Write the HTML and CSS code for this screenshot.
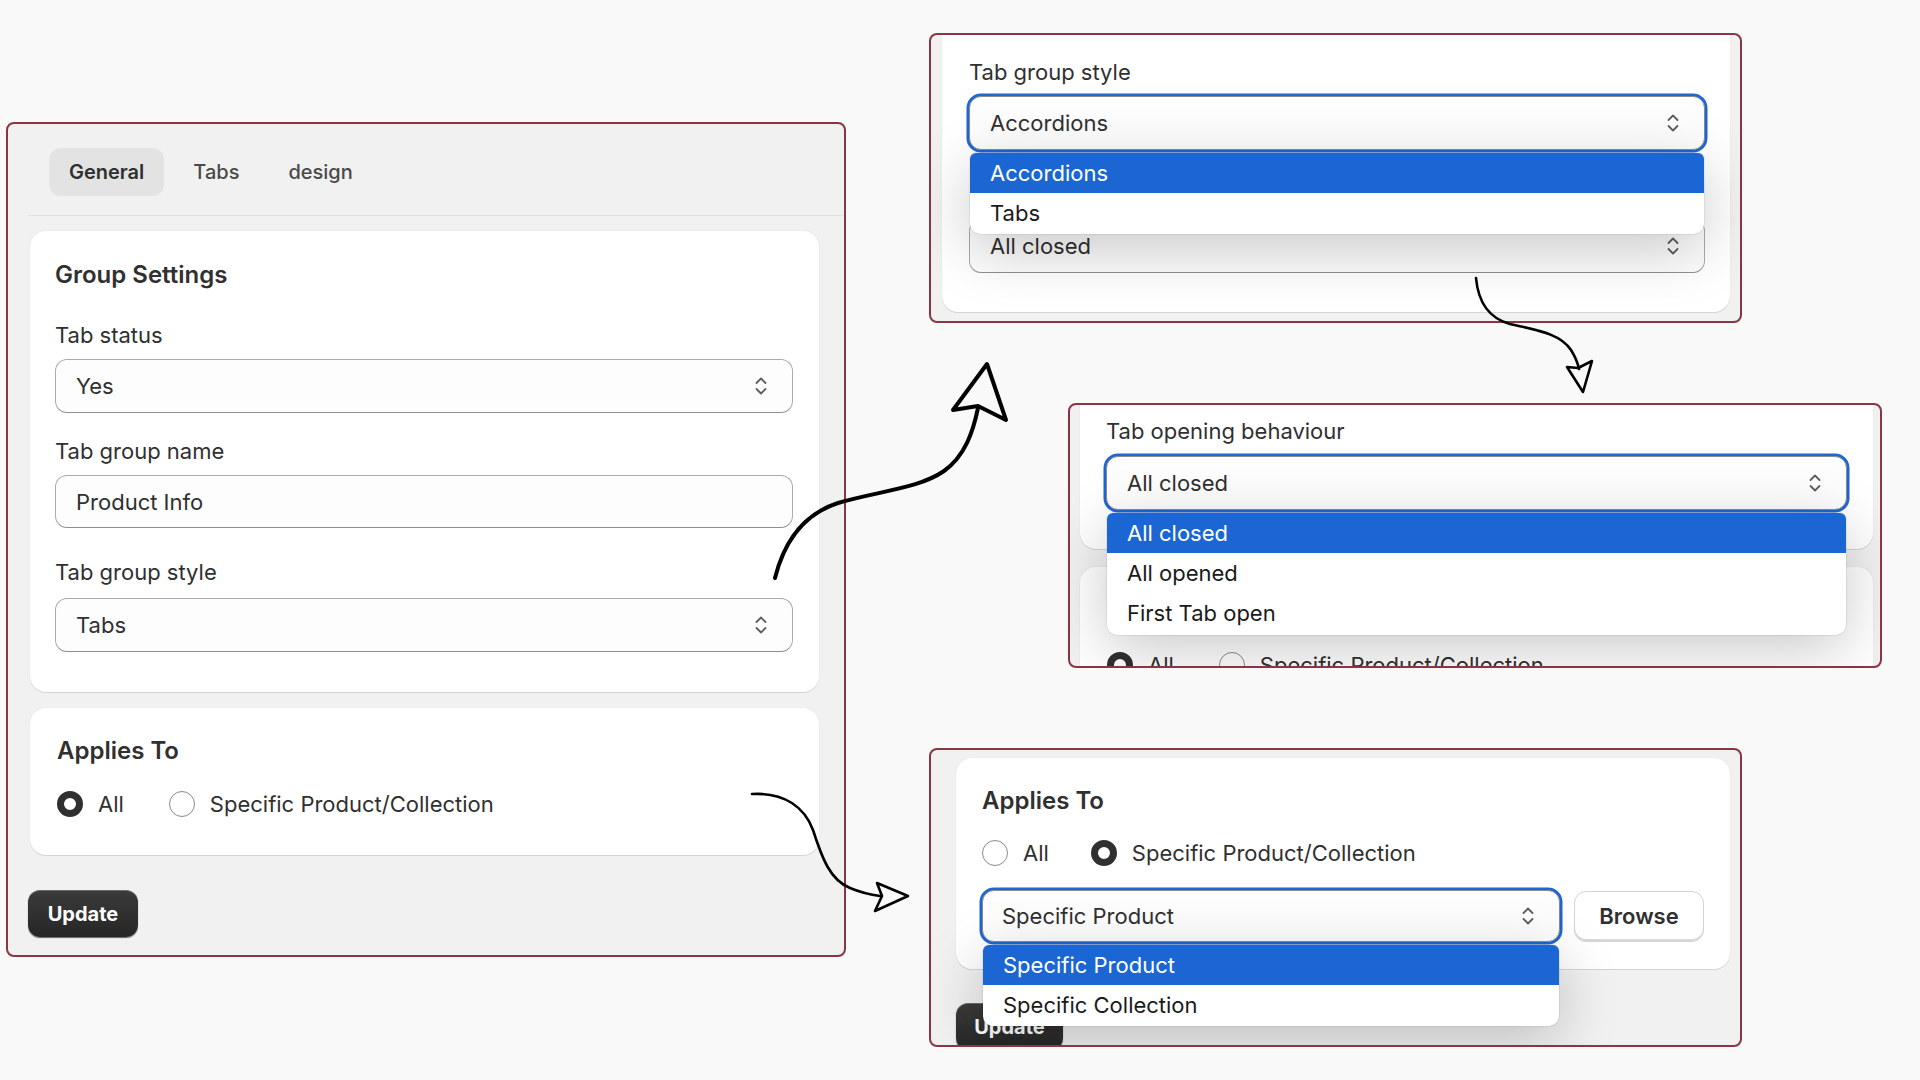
FILE: index.html
```html
<!DOCTYPE html>
<html lang="en">
<head>
<meta charset="utf-8">
<title>Tab group settings</title>
<link rel="stylesheet" href="styles.css">
</head>
<body>
<div class="canvas">

  <section class="shot shot-main">
    <nav class="tabbar">
      <span class="tab is-active">General</span>
      <span class="tab">Tabs</span>
      <span class="tab">design</span>
    </nav>
    <div class="main-body">
      <div class="card card-settings">
        <h2 class="card-title">Group Settings</h2>
        <div class="field field-first">
          <label class="field-label">Tab status</label>
          <div class="select"><span>Yes</span><svg class="chev" viewBox="0 0 12 18"><path d="M1.5 6 6 1.5 10.5 6M1.5 12 6 16.5 10.5 12"/></svg></div>
        </div>
        <div class="field">
          <label class="field-label">Tab group name</label>
          <div class="text-input">Product Info</div>
        </div>
        <div class="field field-after-input">
          <label class="field-label field-label-loose">Tab group style</label>
          <div class="select"><span>Tabs</span><svg class="chev" viewBox="0 0 12 18"><path d="M1.5 6 6 1.5 10.5 6M1.5 12 6 16.5 10.5 12"/></svg></div>
        </div>
      </div>
      <div class="card card-applies">
        <h2 class="card-title">Applies To</h2>
        <div class="radio-group">
          <span class="radio-option"><span class="radio is-checked"></span>All</span>
          <span class="radio-option"><span class="radio"></span>Specific Product/Collection</span>
        </div>
      </div>
      <button class="btn-primary">Update</button>
    </div>
  </section>

  <section class="shot shot-style">
    <div class="card card-clip card-style">
      <label class="field-label">Tab group style</label>
      <div class="select is-open">
        <span>Accordions</span><svg class="chev" viewBox="0 0 12 18"><path d="M1.5 6 6 1.5 10.5 6M1.5 12 6 16.5 10.5 12"/></svg>
        <div class="menu">
          <div class="menu-item is-selected">Accordions</div>
          <div class="menu-item">Tabs</div>
        </div>
      </div>
      <div class="field field-hidden-label">
        <label class="field-label is-covered">Tab opening behaviour</label>
        <div class="select"><span>All closed</span><svg class="chev" viewBox="0 0 12 18"><path d="M1.5 6 6 1.5 10.5 6M1.5 12 6 16.5 10.5 12"/></svg></div>
      </div>
    </div>
  </section>

  <section class="shot shot-behaviour">
    <div class="card card-clip card-behaviour">
      <label class="field-label">Tab opening behaviour</label>
      <div class="select is-open">
        <span>All closed</span><svg class="chev" viewBox="0 0 12 18"><path d="M1.5 6 6 1.5 10.5 6M1.5 12 6 16.5 10.5 12"/></svg>
        <div class="menu">
          <div class="menu-item is-selected">All closed</div>
          <div class="menu-item">All opened</div>
          <div class="menu-item">First Tab open</div>
        </div>
      </div>
    </div>
    <div class="card card-behaviour-applies">
      <h2 class="card-title is-covered">Applies To</h2>
      <div class="radio-group">
        <span class="radio-option"><span class="radio is-checked"></span>All</span>
        <span class="radio-option"><span class="radio"></span>Specific Product/Collection</span>
      </div>
    </div>
  </section>

  <section class="shot shot-applies">
    <div class="card card-applies-open">
      <h2 class="card-title">Applies To</h2>
      <div class="radio-group">
        <span class="radio-option"><span class="radio"></span>All</span>
        <span class="radio-option"><span class="radio is-checked"></span>Specific Product/Collection</span>
      </div>
      <div class="picker-row">
        <div class="select is-open select-compact">
          <span>Specific Product</span><svg class="chev" viewBox="0 0 12 18"><path d="M1.5 6 6 1.5 10.5 6M1.5 12 6 16.5 10.5 12"/></svg>
          <div class="menu menu-tight">
            <div class="menu-item is-selected">Specific Product</div>
            <div class="menu-item">Specific Collection</div>
          </div>
        </div>
        <button class="btn-secondary">Browse</button>
      </div>
    </div>
    <button class="btn-primary btn-primary-clipped">Update</button>
  </section>

  <svg class="arrows" viewBox="0 0 1920 1080" width="1920" height="1080">
    <g class="arrow arrow-thick">
      <path d="M775 578 C784 542 804 514 838 503 C878 491 918 489 944 471 C965 456 973 432 978 408"/>
      <path d="M987 364 L1006 420 L978 406 L953 410 Z"/>
    </g>
    <g class="arrow">
      <path d="M752 794 C785 792 805 808 813 830 C822 858 830 880 850 888 C862 893 872 895 880 896"/>
      <path d="M877 883 L908 896 L875 911 L882 896 Z"/>
    </g>
    <g class="arrow">
      <path d="M1476 278 C1478 300 1488 318 1510 324 C1535 330 1560 333 1571 350 C1576 358 1578 364 1579 369"/>
      <path d="M1567 367 L1578 368 L1592 361 L1583 392 Z"/>
    </g>
  </svg>
</div>
</body>
</html>
```

FILE: styles.css
```css
* { box-sizing: border-box; }

html, body { margin: 0; padding: 0; }

body {
  width: 1920px;
  height: 1080px;
  overflow: hidden;
  background: #f9f9f9;
  font-family: Inter, "Noto Sans", "Liberation Sans", sans-serif;
  color: #303030;
}

.canvas { position: relative; width: 1920px; height: 1080px; }

/* screenshot frames placed on the canvas */
.shot {
  position: absolute;
  border: 2px solid #8b3443;
  border-radius: 8px;
  background: #f1f1f1;
  overflow: hidden;
  display: flex;
  flex-direction: column;
}
.shot-main { left: 6px; top: 122px; width: 840px; height: 835px; }
.shot-style { left: 929px; top: 33px; width: 813px; height: 290px; }
.shot-behaviour { left: 1068px; top: 403px; width: 814px; height: 265px; }
.shot-applies { left: 929px; top: 748px; width: 813px; height: 299px; }

/* tabs */
.tabbar {
  display: flex;
  gap: 9px;
  margin-left: 20px;
  padding: 24px 0 19px 21px;
  border-bottom: 1px solid #e2e2e2;
}
.tab {
  height: 48px;
  padding: 0 20px;
  border-radius: 12px;
  display: flex;
  align-items: center;
  font-size: 20px;
  font-weight: 500;
  color: #4a4a4a;
}
.tab.is-active { background: #e3e3e3; color: #303030; font-weight: 600; }

.main-body {
  display: flex;
  flex-direction: column;
  padding: 15px 25px 0 22px;
}

/* cards */
.card {
  background: #fff;
  border-radius: 16px;
  box-shadow: 0 1px 0 #d4d4d4, 0 0 0 1px #ececec;
  flex-shrink: 0;
}
.card-title {
  margin: 0;
  font-size: 24px;
  line-height: 26px;
  font-weight: 600;
}
.card-settings { padding: 31px 26px 40px 25px; }
.card-applies { margin-top: 16px; padding: 30px 26px 38px 27px; }

.field { margin-top: 25px; }
.field-first { margin-top: 34px; }
.field-after-input { margin-top: 31px; }
.field-hidden-label { margin-top: 32px; }

.field-label {
  display: block;
  font-size: 22px;
  line-height: 26px;
  margin-bottom: 11px;
}
.field-label-loose { margin-bottom: 13px; }
.is-covered { visibility: hidden; }

.select, .text-input {
  position: relative;
  height: 54px;
  border: 1px solid #ababab;
  border-bottom-color: #8f8f8f;
  border-radius: 12px;
  background: #fdfdfd;
  display: flex;
  align-items: center;
  justify-content: space-between;
  padding: 0 25px 0 20px;
  font-size: 22px;
}
.text-input { height: 53px; }
.chev {
  width: 12px;
  height: 18px;
  fill: none;
  stroke: #5e5e5e;
  stroke-width: 1.8;
  stroke-linecap: round;
  stroke-linejoin: round;
}
.select.is-open {
  border-color: #8a8a8a;
  box-shadow: 0 0 0 2.5px #1d66d6;
  z-index: 3;
}

/* open dropdown menu */
.menu {
  position: absolute;
  top: calc(100% + 4px);
  left: 0;
  right: 0;
  background: #fff;
  border-radius: 6px 6px 10px 10px;
  box-shadow: 0 14px 60px rgba(0, 0, 0, 0.22), 0 0 0 0.5px rgba(0, 0, 0, 0.12);
  overflow: hidden;
  padding-bottom: 1px;
}
.menu-item {
  height: 40px;
  padding: 0 20px;
  display: flex;
  align-items: center;
  font-size: 22px;
  color: #1a1a1a;
}
.menu-item.is-selected { background: #1b66d2; color: #fff; }
.menu-tight { top: calc(100% + 4px); }

/* clipped cards in the zoomed frames */
.card-clip { margin-top: -30px; }
.card-style { margin-left: 11px; margin-right: 10px; padding: 54px 25px 39px 27px; }
.card-behaviour { margin-left: 10px; margin-right: 7px; padding: 43px 26px 39px 26px; }
.card-behaviour .field-label { margin-bottom: 12px; }
.card-behaviour .menu { padding-bottom: 2px; }
.card-behaviour-applies { margin: 18px 7px 0 10px; padding: 31px 26px 30px 27px; }

.card-applies-open { margin: 8px 10px 0 25px; padding: 30px 26px 27px 26px; }

/* radios */
.radio-group { display: flex; gap: 45px; margin-top: 28px; }
.card-applies .radio-group { margin-top: 27px; }
.card-applies-open .radio-group { margin-top: 26px; gap: 42px; }
.radio-option {
  display: flex;
  align-items: center;
  gap: 15px;
  font-size: 22px;
  line-height: 26px;
}
.radio {
  width: 26px;
  height: 26px;
  border-radius: 50%;
  border: 1.5px solid #8a8a8a;
  background: #fff;
}
.radio.is-checked { border: 7px solid #303030; }

.picker-row { display: flex; gap: 14px; margin-top: 24px; align-items: center; }
.select-compact { flex: 1; height: 52px; padding-left: 19px; }

.btn-secondary {
  width: 130px;
  height: 51px;
  border: 1px solid #d3d3d3;
  border-radius: 12px;
  background: #fff;
  box-shadow: inset 0 -2px 0 #d9d9d9;
  font-family: inherit;
  font-size: 22px;
  font-weight: 600;
  color: #303030;
}

.btn-primary {
  align-self: flex-start;
  margin-top: 35px;
  margin-left: -2px;
  width: 110px;
  height: 47px;
  border: none;
  border-radius: 12px;
  background: linear-gradient(#3b3b3b, #262626);
  box-shadow: inset 0 1px 0 rgba(255, 255, 255, 0.25), 0 1px 1px rgba(0, 0, 0, 0.6);
  font-family: inherit;
  font-size: 20px;
  font-weight: 700;
  color: #fff;
  flex-shrink: 0;
}
.btn-primary-clipped { margin-top: 34px; margin-left: 25px; width: 107px; }

/* hand-drawn arrows overlay */
.arrows { position: absolute; left: 0; top: 0; pointer-events: none; }
.arrow path {
  fill: none;
  stroke: #000;
  stroke-width: 2.6;
  stroke-linecap: round;
  stroke-linejoin: round;
}
.arrow-thick path { stroke-width: 4; }
```
